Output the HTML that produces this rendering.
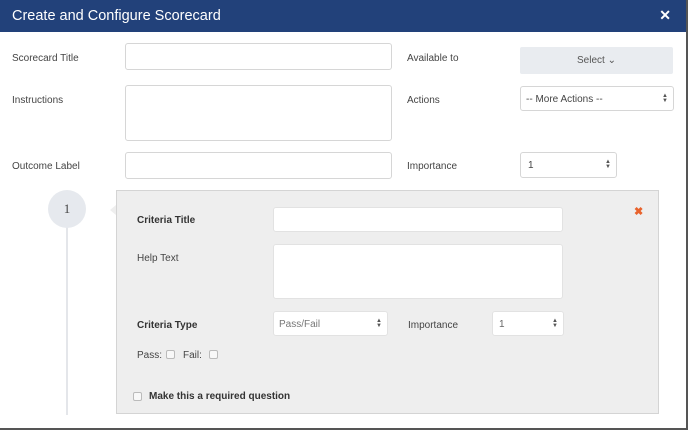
<!DOCTYPE html>
<html><head><style>
body{margin:0;width:688px;height:430px;background:#555;overflow:hidden;font-family:"Liberation Sans",sans-serif;}
.dlg{position:absolute;left:0;top:0;width:686px;height:428px;background:#fff;overflow:hidden;}
.hd{position:absolute;left:0;top:0;width:686px;height:32px;background:#22417a;color:#fff;}
.hd .t{position:absolute;left:12px;top:8px;font-size:14.5px;}
.hd .x{position:absolute;right:15px;top:7px;font-size:14px;font-weight:bold;}
.a{position:absolute;font-size:10px;color:#444;}
.in{position:absolute;background:#fff;border:1px solid #d6d6d6;border-radius:3px;box-sizing:border-box;}
.b{font-weight:bold;color:#333;}
.arr{position:absolute;right:5px;top:50%;transform:translateY(-50%);font-size:6px;line-height:5px;color:#555;}
.cb{position:absolute;width:7px;height:7px;border:1px solid #bbb;border-radius:2px;background:#f8f8f8;}
</style></head><body>
<div class="dlg">
<div class="hd"><div class="t">Create and Configure Scorecard</div><div class="x">✕</div></div>
<div class="a" style="left:12px;top:53px">Scorecard Title</div>
<div class="in" style="left:125px;top:43px;width:267px;height:27px"></div>
<div class="a" style="left:407px;top:53px">Available to</div>
<div style="position:absolute;left:520px;top:47px;width:153px;height:27px;background:#e9ecf0;border-radius:2px;font-size:10px;color:#555;text-align:center;line-height:27px">Select ⌄</div>
<div class="a" style="left:12px;top:95px">Instructions</div>
<div class="in" style="left:125px;top:85px;width:267px;height:56px"></div>
<div class="a" style="left:407px;top:95px">Actions</div>
<div class="in" style="left:520px;top:86px;width:154px;height:25px"><span class="a" style="left:5px;top:7px">-- More Actions --</span><div class="arr">▲<br>▼</div></div>
<div class="a" style="left:12px;top:161px">Outcome Label</div>
<div class="in" style="left:125px;top:152px;width:267px;height:27px"></div>
<div class="a" style="left:407px;top:161px">Importance</div>
<div class="in" style="left:520px;top:152px;width:97px;height:26px"><span class="a" style="left:7px;top:7px">1</span><div class="arr">▲<br>▼</div></div>
<div style="position:absolute;left:66px;top:225px;width:2px;height:190px;background:#e4e6ea"></div>
<div style="position:absolute;left:48px;top:190px;width:38px;height:38px;border-radius:50%;background:#e6e9ee;font-family:'Liberation Serif',serif;font-size:13px;color:#444;text-align:center;line-height:38px">1</div>
<div style="position:absolute;left:116px;top:190px;width:541px;height:222px;background:#eeeeee;border:1px solid #d4d4d4"></div>
<div style="position:absolute;left:110px;top:205px;width:0;height:0;border-top:5px solid transparent;border-bottom:5px solid transparent;border-right:6px solid #eee"></div>
<div class="a b" style="left:137px;top:215px">Criteria Title</div>
<div style="position:absolute;left:634px;top:205px;color:#e8622c;font-size:11px;font-weight:bold">✖</div>
<div class="in" style="left:273px;top:207px;width:290px;height:25px;border-color:#e2e2e2"></div>
<div class="a" style="left:137px;top:253px">Help Text</div>
<div class="in" style="left:273px;top:244px;width:290px;height:55px;border-color:#e2e2e2"></div>
<div class="a b" style="left:137px;top:320px">Criteria Type</div>
<div class="in" style="left:273px;top:311px;width:115px;height:25px;border-color:#e2e2e2"><span class="a" style="left:5px;top:7px;color:#777">Pass/Fail</span><div class="arr">▲<br>▼</div></div>
<div class="a" style="left:408px;top:320px">Importance</div>
<div class="in" style="left:492px;top:311px;width:72px;height:25px;border-color:#e2e2e2"><span class="a" style="left:6px;top:7px;color:#666">1</span><div class="arr">▲<br>▼</div></div>
<div class="a" style="left:137px;top:350px">Pass:</div><div class="cb" style="left:166px;top:350px"></div>
<div class="a" style="left:183px;top:350px">Fail:</div><div class="cb" style="left:209px;top:350px"></div>
<div class="cb" style="left:133px;top:392px"></div>
<div class="a b" style="left:149px;top:391px">Make this a required question</div>
</div>
</body></html>
